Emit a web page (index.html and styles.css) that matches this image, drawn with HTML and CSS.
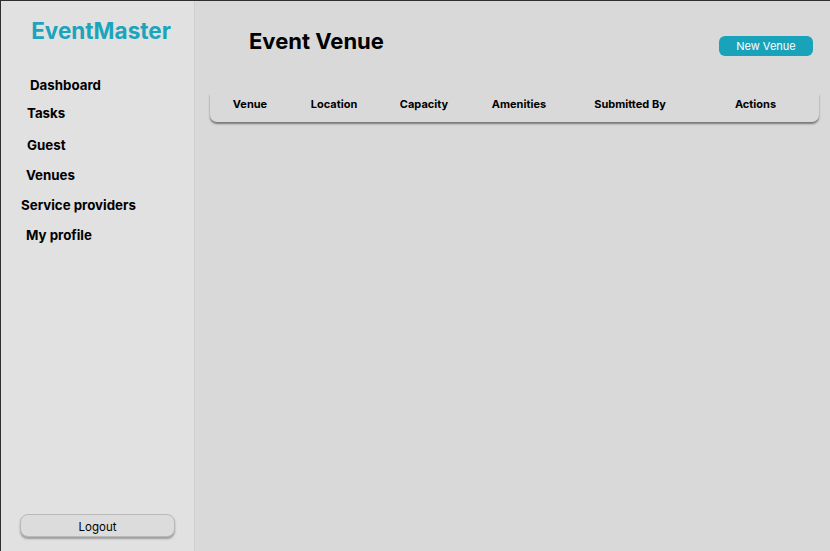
FILE: index.html
```html
<!DOCTYPE html>
<html>
<head>
<meta charset="utf-8">
<link rel="stylesheet" href="styles.css">
</head>
<body>
<div class="app">
  <aside class="sidebar">
    <div class="logo">EventMaster</div>
    <nav class="nav">
      <a class="nav-item nav-dashboard">Dashboard</a>
      <a class="nav-item nav-tasks">Tasks</a>
      <a class="nav-item nav-guest">Guest</a>
      <a class="nav-item nav-venues">Venues</a>
      <a class="nav-item nav-providers">Service providers</a>
      <a class="nav-item nav-profile">My profile</a>
    </nav>
    <div class="spacer"></div>
    <button class="logout">Logout</button>
  </aside>
  <main class="main">
    <header class="header">
      <h1 class="title">Event Venue</h1>
      <button class="new-btn">New Venue</button>
    </header>
    <div class="table-head">
      <div class="th">Venue</div>
      <div class="th">Location</div>
      <div class="th">Capacity</div>
      <div class="th">Amenities</div>
      <div class="th">Submitted By</div>
      <div class="th">Actions</div>
    </div>
  </main>
</div>
</body>
</html>
```
FILE: styles.css
```css
* { box-sizing: border-box; }
html, body { margin: 0; height: 100%; }
body {
  font-family: "Inter", "Noto Sans", sans-serif;
  background: #d9d9d9;
  color: #000;
}
.app {
  display: grid;
  grid-template-columns: 194px 1fr;
  height: 551px;
  border-top: 1px solid #2e2e2e;
  border-left: 1px solid #2e2e2e;
}
.sidebar {
  background: #e1e1e1;
  border-right: 1px solid #cfcfcf;
  display: flex;
  flex-direction: column;
  padding: 16px 0 13px;
}
.logo {
  color: #1ba4bb;
  font-weight: 700;
  font-size: 22.5px;
  text-align: center;
  line-height: 27px;
  padding-left: 7px;
}
.nav {
  display: flex;
  flex-direction: column;
  margin-top: 32px;
}
.nav-item {
  font-weight: 700;
  font-size: 13.3px;
  line-height: 18px;
  color: #000;
}
.nav-dashboard { padding-left: 29px; }
.nav-tasks { padding-left: 26px; margin-top: 10px; }
.nav-guest { padding-left: 26px; margin-top: 14px; }
.nav-venues { padding-left: 25px; margin-top: 12px; }
.nav-providers { padding-left: 20px; margin-top: 12px; }
.nav-profile { padding-left: 25px; margin-top: 12px; }
.spacer { flex: 1; }
.logout {
  margin: 0 19px 1px 19px;
  height: 23px;
  border: 1px solid #b9b9b9;
  border-radius: 8px;
  background: #dcdcdc;
  box-shadow: 0 2px 2px rgba(0,0,0,0.3);
  font-family: "Inter", "Noto Sans", sans-serif;
  font-size: 11.5px;
  color: #000;
  padding: 2px 0 0;
}
.main {
  display: flex;
  flex-direction: column;
  padding: 0 17px 0 15px;
}
.header {
  display: flex;
  justify-content: space-between;
  align-items: flex-start;
  height: 92px;
}
.title {
  margin: 27px 0 0 39px;
  font-size: 22px;
  font-weight: 700;
  line-height: 26px;
}
.new-btn {
  margin-top: 35px;
  width: 94px;
  height: 20px;
  border: none;
  border-radius: 6px;
  background: #18a3bb;
  color: #fff;
  font-family: "Inter", "Noto Sans", sans-serif;
  font-size: 11px;
  padding: 0;
}
.table-head {
  display: grid;
  grid-template-columns: 80px 88px 92px 98px 124px 1fr;
  align-items: center;
  height: 29px;
  padding-bottom: 7px;
  margin-right: -6px;
  border-radius: 0 0 7px 7px;
  background: #d9d9d9;
  box-shadow: 0 2px 2px rgba(0,0,0,0.45);
}
.th {
  text-align: center;
  font-size: 11px;
  font-weight: 700;
  line-height: 14px;
}
```
